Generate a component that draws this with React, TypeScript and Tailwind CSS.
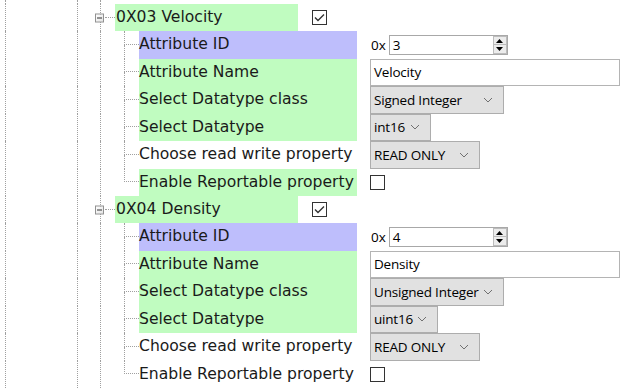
import React from "react";

const line = "border-dotted border-[#a0a0a0]";
const GREEN = "bg-[#c0fcc0]";
const PURPLE = "bg-[#bebefc]";
const treeFont = { fontFamily: '"DejaVu Sans", Verdana, sans-serif' };
const ctlFont = { fontFamily: '"Open Sans", "Segoe UI", sans-serif' };

function Indent() {
  return (
    <>
      <div className="w-[5px] shrink-0" />
      <div className={`w-[72px] shrink-0 border-l ${line}`} />
      <div className={`w-[23px] shrink-0 border-l ${line}`} />
    </>
  );
}

function Checkbox({ checked }: { checked?: boolean }) {
  return (
    <div className="w-[15px] h-[15px] border border-[#333333] bg-white flex items-center justify-center">
      {checked && (
        <svg width="11" height="9" viewBox="0 0 11 9">
          <polyline points="1,4.5 4,7.5 10,1.5" fill="none" stroke="#333333" strokeWidth="1.4" />
        </svg>
      )}
    </div>
  );
}

function Expander() {
  return (
    <div className="absolute left-[-6px] top-1/2 -translate-y-1/2 w-[9px] h-[9px] border border-[#919191] bg-gradient-to-br from-white to-[#e4e4e4] flex items-center justify-center">
      <div className="w-[5px] h-[1px] bg-[#333333]" />
    </div>
  );
}

function Chevron() {
  return (
    <svg width="10" height="6" viewBox="0 0 10 6" className="shrink-0">
      <polyline points="1,1 5,5 9,1" fill="none" stroke="#707070" strokeWidth="1" />
    </svg>
  );
}

function Select({ text, width }: { text: string; width: number }) {
  return (
    <div
      className="h-[27.5px] border border-[#adadad] bg-[#e1e1e1] flex items-center pl-[3px] pr-[10px] text-[13.5px] text-black"
      style={{ width, ...ctlFont }}
    >
      <span className="flex-1 whitespace-nowrap tracking-[-0.2px]">{text}</span>
      <Chevron />
    </div>
  );
}

function TextBox({ text }: { text: string }) {
  return (
    <div
      className="h-[27.5px] w-[250px] border border-[#b4b4b4] bg-white flex items-center pl-[3px] text-[13.5px] text-black tracking-[-0.2px]"
      style={ctlFont}
    >
      {text}
    </div>
  );
}

function Spin({ value }: { value: string }) {
  return (
    <div className="flex items-center text-[13.5px] text-black" style={ctlFont}>
      <span className="mr-[3px] ml-[1px]">0x</span>
      <div className="w-[119px] h-[20px] border border-[#a8a8a8] bg-white flex items-center">
        <span className="flex-1 pl-[3px]">{value}</span>
        <div className="w-[14px] h-[18px] mr-[0px] flex flex-col">
          <div className="flex-1 bg-[#ececec] border border-[#bcbcbc] flex items-center justify-center">
            <svg width="7" height="4" viewBox="0 0 7 4"><polygon points="0,4 7,4 3.5,0" fill="#000" /></svg>
          </div>
          <div className="flex-1 bg-[#ececec] border border-t-0 border-[#bcbcbc] flex items-center justify-center">
            <svg width="7" height="4" viewBox="0 0 7 4"><polygon points="0,0 7,0 3.5,4" fill="#000" /></svg>
          </div>
        </div>
      </div>
    </div>
  );
}

function HeaderRow({ title }: { title: string }) {
  return (
    <div className="flex h-[27.5px]">
      <Indent />
      <div className={`relative w-[15px] shrink-0 border-l ${line} flex items-center`}>
        <Expander />
        <div className={`ml-[4px] flex-1 border-t ${line}`} />
      </div>
      <div className={`w-[183px] shrink-0 ${GREEN} pl-[1px] flex items-center text-[15.6px] text-[#1a1a1a]`} style={treeFont}>
        {title}
      </div>
      <div className="ml-[14px] flex items-center">
        <Checkbox checked />
      </div>
    </div>
  );
}

function ChildRow({
  label,
  bg,
  last,
  children,
}: {
  label: string;
  bg: string;
  last?: boolean;
  children: React.ReactNode;
}) {
  return (
    <div className="flex h-[27.5px]">
      <Indent />
      <div className={`w-[24px] shrink-0 border-l ${line}`} />
      <div className="w-[15px] shrink-0 flex flex-col">
        <div className={`h-1/2 border-l border-b ${line}`} />
        <div className={`flex-1 ${last ? "" : `border-l ${line}`}`} />
      </div>
      <div className={`w-[218px] shrink-0 ${bg} flex items-center text-[15.6px] text-[#1a1a1a] whitespace-nowrap`} style={treeFont}>
        {label}
      </div>
      <div className="ml-[13px] flex items-center">{children}</div>
    </div>
  );
}

type Attr = {
  title: string;
  id: string;
  name: string;
  cls: string;
  dt: string;
  dtW: number;
  bgs: string[];
};

const attrs: Attr[] = [
  {
    title: "0X03 Velocity",
    id: "3",
    name: "Velocity",
    cls: "Signed Integer",
    dt: "int16",
    dtW: 61,
    bgs: [PURPLE, GREEN, GREEN, GREEN, "", GREEN],
  },
  {
    title: "0X04 Density",
    id: "4",
    name: "Density",
    cls: "Unsigned Integer",
    dt: "uint16",
    dtW: 68,
    bgs: [PURPLE, GREEN, GREEN, GREEN, "", ""],
  },
];

export default function App() {
  return (
    <div className="w-[622px] h-[388px] overflow-hidden bg-white flex flex-col">
      <div className="flex h-[4px] shrink-0">
        <Indent />
        <div className={`w-[15px] shrink-0 border-l ${line}`} />
      </div>
      {attrs.map((a) => (
        <React.Fragment key={a.title}>
          <HeaderRow title={a.title} />
          <ChildRow label="Attribute ID" bg={a.bgs[0]}>
            <Spin value={a.id} />
          </ChildRow>
          <ChildRow label="Attribute Name" bg={a.bgs[1]}>
            <TextBox text={a.name} />
          </ChildRow>
          <ChildRow label="Select Datatype class" bg={a.bgs[2]}>
            <Select text={a.cls} width={134} />
          </ChildRow>
          <ChildRow label="Select Datatype" bg={a.bgs[3]}>
            <Select text={a.dt} width={a.dtW} />
          </ChildRow>
          <ChildRow label="Choose read write property" bg={a.bgs[4]}>
            <Select text="READ ONLY" width={110} />
          </ChildRow>
          <ChildRow label="Enable Reportable property" bg={a.bgs[5]} last>
            <Checkbox />
          </ChildRow>
        </React.Fragment>
      ))}
    </div>
  );
}
